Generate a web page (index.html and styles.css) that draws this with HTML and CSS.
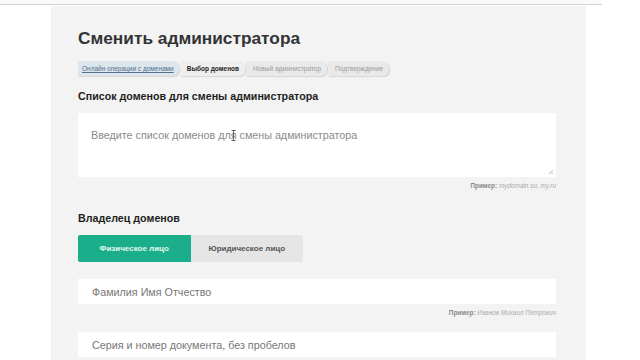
FILE: index.html
```html
<!DOCTYPE html>
<html lang="ru">
<head>
<meta charset="utf-8">
<link rel="stylesheet" href="styles.css">
</head>
<body>
<div class="topline"></div>
<main class="panel">
  <h1 class="title">Сменить администратора</h1>
  <nav class="crumbs">
    <a class="crumb crumb-link" href="#">Онлайн операции с доменами</a>
    <span class="crumb crumb-current">Выбор доменов</span>
    <span class="crumb">Новый администратор</span>
    <span class="crumb">Подтверждение</span>
  </nav>
  <h2 class="section">Список доменов для смены администратора</h2>
  <div class="textarea">
    <span class="placeholder">Введите список доменов для смены администратора</span>
    <svg class="cursor" width="5" height="11" viewBox="0 0 5 11"><path d="M0.5 0.5H4.5M2.5 0.5V10.5M0.5 10.5H4.5" stroke="#555" stroke-width="0.9" fill="none"/></svg>
    <svg class="grip" width="6" height="6" viewBox="0 0 6 6"><path d="M5 1L1 5M5 3.5L3.5 5" stroke="#999" stroke-width="0.7"/></svg>
  </div>
  <div class="hint"><b>Пример:</b> <i>mydomain.su, my.ru</i></div>
  <h2 class="section section-owner">Владелец доменов</h2>
  <div class="toggle">
    <div class="tbtn tbtn-on">Физическое лицо</div>
    <div class="tbtn">Юридическое лицо</div>
  </div>
  <div class="input">Фамилия Имя Отчество</div>
  <div class="hint"><b>Пример:</b> <i>Иванов Михаил Петрович</i></div>
  <div class="input input-second">Серия и номер документа, без пробелов</div>
</main>
</body>
</html>
```
FILE: styles.css
```css
html, body {
  margin: 0;
  padding: 0;
  background: #ffffff;
  height: 360px;
  overflow: hidden;
  font-family: "Liberation Sans", Arial, sans-serif;
}
.topline {
  height: 4px;
  width: 602px;
  border-bottom: 1px solid #d4d4d4;
  background: #fafafa;
  margin-bottom: 1px;
}
.panel {
  margin-left: 51px;
  width: 535px;
  box-sizing: border-box;
  padding: 20px 30px 0 27px;
  background: #f3f3f3;
  height: 360px;
}
.title {
  margin: 0;
  font-size: 17.3px;
  line-height: 24px;
  font-weight: 700;
  color: #333333;
}
.crumbs {
  display: flex;
  margin-top: 11px;
  height: 15px;
}
.crumb {
  display: flex;
  align-items: center;
  padding: 0 6px 0 7px;
  font-size: 6.5px;
  white-space: nowrap;
  color: #9a9a9a;
  background: #e9e9e9;
  border-radius: 0 6px 6px 0;
  box-shadow: 1px 1px 1px rgba(0,0,0,0.12);
  margin-right: 1px;
}
.crumb-link {
  background: #dbe6ee;
  color: #52708a;
  text-decoration: underline;
  padding: 0 5px 0 4px;
}
.crumb-current {
  color: #222222;
  font-weight: 700;
  background: #eeeeee;
}
.section {
  margin: 13px 0 0 0;
  font-size: 10.7px;
  line-height: 14px;
  font-weight: 700;
  color: #1e1e1e;
}
.section-owner {
  margin-top: 21px;
}
.textarea {
  position: relative;
  margin-top: 10px;
  height: 64px;
  background: #ffffff;
  box-sizing: border-box;
  padding: 12px 13px;
}
.placeholder {
  font-size: 10.75px;
  color: #8a8a8a;
}
.cursor {
  position: absolute;
  left: 153px;
  top: 17px;
}
.grip {
  position: absolute;
  right: 2px;
  bottom: 2px;
}
.hint {
  text-align: right;
  font-size: 6.4px;
  color: #9a9a9a;
  margin-top: 5px;
  line-height: 8px;
}
.hint b {
  color: #8a8a8a;
}
.hint i {
  color: #aaaaaa;
}
.toggle {
  display: flex;
  margin-top: 10px;
  width: 225px;
  height: 27px;
}
.tbtn {
  flex: 1;
  display: flex;
  align-items: center;
  justify-content: center;
  background: #e5e5e5;
  font-size: 8px;
  font-weight: 700;
  color: #555555;
  border-radius: 0 2px 2px 0;
}
.tbtn-on {
  background: #1aae8a;
  color: #e6f7f2;
  border-radius: 2px 0 0 2px;
}
.input {
  margin-top: 17px;
  height: 25px;
  background: #ffffff;
  display: flex;
  align-items: center;
  padding-left: 14px;
  font-size: 10.75px;
  color: #777777;
}
.input-second {
  margin-top: 15px;
}
```
